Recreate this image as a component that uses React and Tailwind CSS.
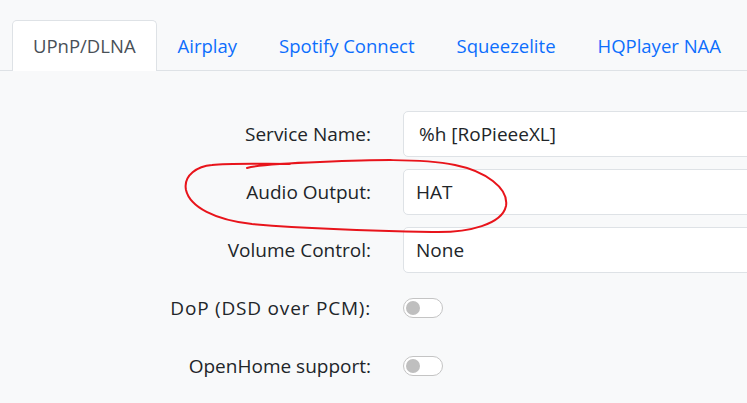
import React from 'react';

const tabs = ['UPnP/DLNA', 'Airplay', 'Spotify Connect', 'Squeezelite', 'HQPlayer NAA'];

const fields = [
  ['Service Name:', '%h [RoPieeeXL]'],
  ['Audio Output:', 'HAT'],
  ['Volume Control:', 'None'],
];

// Tahoma in the shot sets the brackets wider, so the first label gets a little tracking
const toggles = [
  ['DoP (DSD over PCM):', 'tracking-[0.8px]'],
  ['OpenHome support:', ''],
];

function Switch() {
  return (
    <div className="flex h-[20px] w-[40px] items-center rounded-full border border-[#c4c4c4] bg-white px-[2px]">
      <span className="h-[14px] w-[14px] rounded-full bg-[#bfbfbf]" />
    </div>
  );
}

function Row({ label, labelClass = '', children }) {
  return (
    <div className="flex h-[46px] items-center">
      <div className={`w-[359px] shrink-0 text-right text-[19px] whitespace-nowrap text-[#212529] ${labelClass}`}>
        {label}
      </div>
      <div className="ml-[32px] flex-1">{children}</div>
    </div>
  );
}

export default function App() {
  return (
    <div
      className="relative h-[403px] w-full overflow-hidden bg-[#f8f9fa] pt-[20px]"
      style={{ fontFamily: '"Open Sans", "Liberation Sans", sans-serif' }}
    >
      <div className="flex border-b border-[#dee2e6] pl-3">
        {tabs.map((tab, index) => (
          <div
            key={tab}
            className={`-mb-px flex h-[51px] shrink-0 items-center whitespace-nowrap px-5 text-[18.5px] ${
              index === 0
                ? 'rounded-t-[5px] border border-b-0 border-[#dee2e6] bg-white text-[#495057]'
                : 'border border-transparent text-[#0d6efd]'
            }`}
          >
            {tab}
          </div>
        ))}
      </div>

      <div className="mt-[40px] ml-3 flex flex-col gap-3">
        {fields.map(([label, value]) => (
          <Row key={label} label={label}>
            <div className="flex h-[46px] w-[400px] items-center rounded-[5px] border border-[#dee2e6] bg-white px-3 text-[19px] whitespace-nowrap text-[#212529]">
              {value === '%h [RoPieeeXL]' ? <span className="pl-[3px]">{value}</span> : value}
            </div>
          </Row>
        ))}
        {toggles.map(([label, labelClass]) => (
          <Row key={label} label={label} labelClass={labelClass}>
            <Switch />
          </Row>
        ))}
      </div>

      <svg className="pointer-events-none absolute left-0 top-0" width="747" height="403">
        <path
          d="M247 168 C 262 164, 290 163, 320 162 C 370 160, 420 158, 455 165 C 485 171, 509 188, 506 206 C 502 224, 470 233, 432 232 C 380 231, 300 228, 252 224 C 215 220, 190 207, 186 190 C 183 175, 198 166, 212 165 C 230 163, 260 164, 290 164"
          fill="none"
          stroke="#e8141b"
          strokeWidth="2"
          strokeLinecap="round"
        />
      </svg>
    </div>
  );
}
